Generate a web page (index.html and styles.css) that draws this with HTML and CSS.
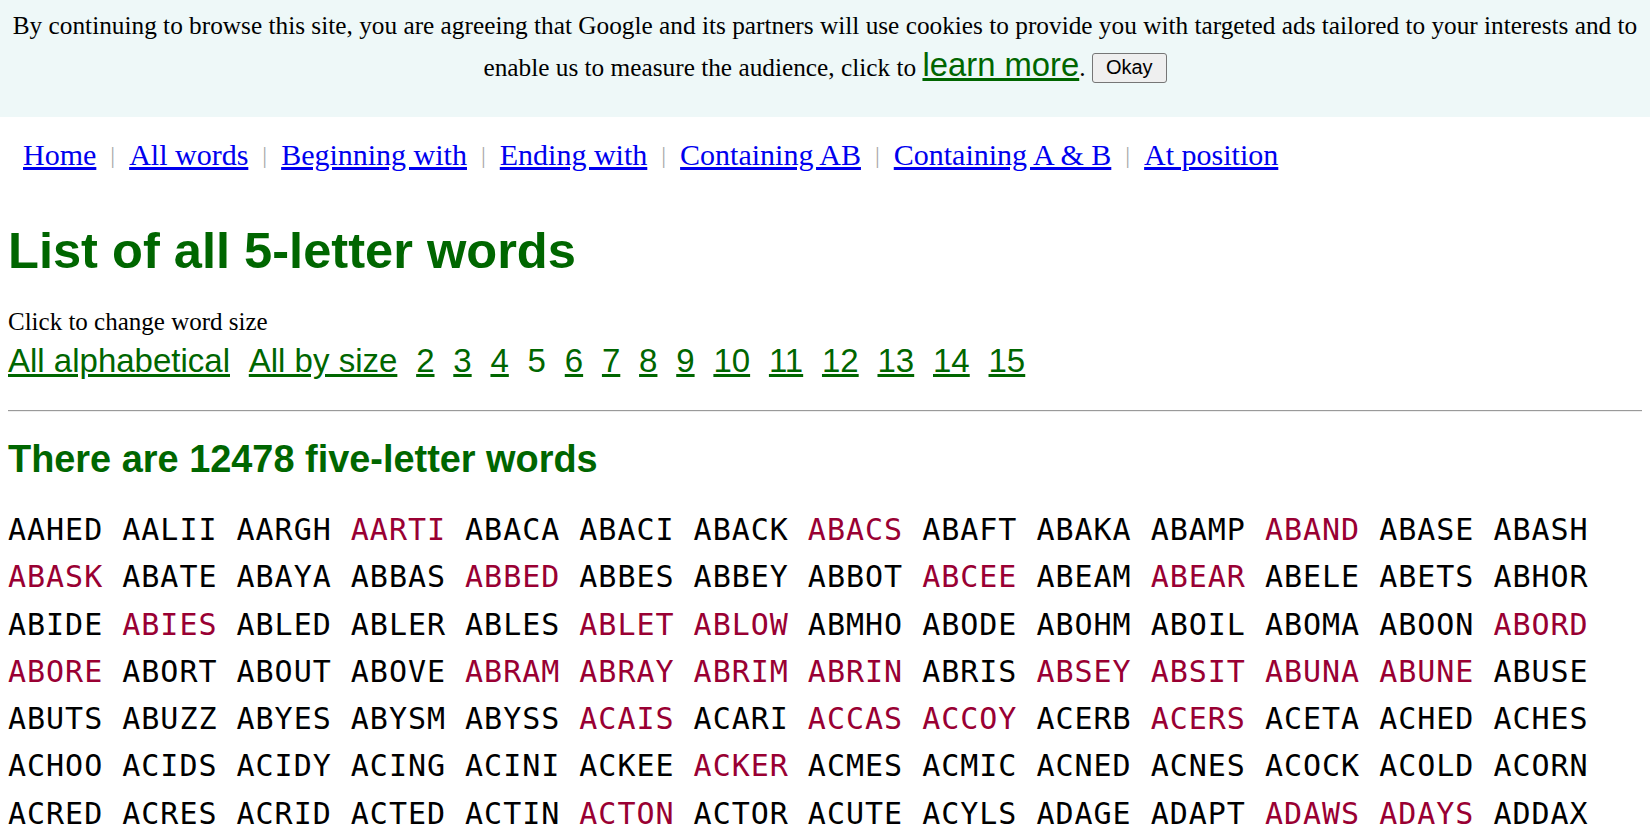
FILE: index.html
```html
<!DOCTYPE html>
<html lang="en">
<head>
<meta charset="utf-8">
<title>List of all 5-letter words</title>
<link rel="stylesheet" href="styles.css">
</head>
<body>
<div class="cookie-bar">
  <p class="cookie-text">By continuing to browse this site, you are agreeing that Google and its partners will use cookies to provide you with targeted ads tailored to your interests and to enable us to measure the audience, click to <a class="learn" href="#">learn more</a>. <button class="okay" type="button">Okay</button></p>
</div>
<div class="page">
  <nav class="topnav">
    <a href="#">Home</a><span class="sep">|</span>
    <a href="#">All words</a><span class="sep">|</span>
    <a href="#">Beginning with</a><span class="sep">|</span>
    <a href="#">Ending with</a><span class="sep">|</span>
    <a href="#">Containing AB</a><span class="sep">|</span>
    <a href="#">Containing A &amp; B</a><span class="sep">|</span>
    <a href="#">At position</a>
  </nav>
  <h1 class="title">List of all 5-letter words</h1>
  <p class="hint">Click to change word size</p>
  <div class="sizes">
    <a href="#">All alphabetical</a>
    <a href="#">All by size</a>
    <a href="#">2</a>
    <a href="#">3</a>
    <a href="#">4</a>
    <span class="current">5</span>
    <a href="#">6</a>
    <a href="#">7</a>
    <a href="#">8</a>
    <a href="#">9</a>
    <a href="#">10</a>
    <a href="#">11</a>
    <a href="#">12</a>
    <a href="#">13</a>
    <a href="#">14</a>
    <a href="#">15</a>
  </div>
  <hr class="rule">
  <h2 class="count">There are 12478 five-letter words</h2>
  <div class="words">
    <span>AAHED</span> <span>AALII</span> <span>AARGH</span> <span class="r">AARTI</span> <span>ABACA</span> <span>ABACI</span> <span>ABACK</span> <span class="r">ABACS</span> <span>ABAFT</span> <span>ABAKA</span> <span>ABAMP</span> <span class="r">ABAND</span> <span>ABASE</span> <span>ABASH</span>
    <span class="r">ABASK</span> <span>ABATE</span> <span>ABAYA</span> <span>ABBAS</span> <span class="r">ABBED</span> <span>ABBES</span> <span>ABBEY</span> <span>ABBOT</span> <span class="r">ABCEE</span> <span>ABEAM</span> <span class="r">ABEAR</span> <span>ABELE</span> <span>ABETS</span> <span>ABHOR</span>
    <span>ABIDE</span> <span class="r">ABIES</span> <span>ABLED</span> <span>ABLER</span> <span>ABLES</span> <span class="r">ABLET</span> <span class="r">ABLOW</span> <span>ABMHO</span> <span>ABODE</span> <span>ABOHM</span> <span>ABOIL</span> <span>ABOMA</span> <span>ABOON</span> <span class="r">ABORD</span>
    <span class="r">ABORE</span> <span>ABORT</span> <span>ABOUT</span> <span>ABOVE</span> <span class="r">ABRAM</span> <span class="r">ABRAY</span> <span class="r">ABRIM</span> <span class="r">ABRIN</span> <span>ABRIS</span> <span class="r">ABSEY</span> <span class="r">ABSIT</span> <span class="r">ABUNA</span> <span class="r">ABUNE</span> <span>ABUSE</span>
    <span>ABUTS</span> <span>ABUZZ</span> <span>ABYES</span> <span>ABYSM</span> <span>ABYSS</span> <span class="r">ACAIS</span> <span>ACARI</span> <span class="r">ACCAS</span> <span class="r">ACCOY</span> <span>ACERB</span> <span class="r">ACERS</span> <span>ACETA</span> <span>ACHED</span> <span>ACHES</span>
    <span>ACHOO</span> <span>ACIDS</span> <span>ACIDY</span> <span>ACING</span> <span>ACINI</span> <span>ACKEE</span> <span class="r">ACKER</span> <span>ACMES</span> <span>ACMIC</span> <span>ACNED</span> <span>ACNES</span> <span>ACOCK</span> <span>ACOLD</span> <span>ACORN</span>
    <span>ACRED</span> <span>ACRES</span> <span>ACRID</span> <span>ACTED</span> <span>ACTIN</span> <span class="r">ACTON</span> <span>ACTOR</span> <span>ACUTE</span> <span>ACYLS</span> <span>ADAGE</span> <span>ADAPT</span> <span class="r">ADAWS</span> <span class="r">ADAYS</span> <span>ADDAX</span>
    <span>ADDED</span> <span>ADDER</span> <span>ADDIO</span> <span>ADDLE</span> <span>ADEEM</span> <span>ADEPT</span> <span>ADHAN</span> <span>ADIEU</span> <span>ADIOS</span> <span>ADITS</span> <span>ADMAN</span> <span>ADMEN</span> <span>ADMIN</span> <span>ADMIT</span>
  </div>
</div>
</body>
</html>
```

FILE: styles.css
```css
html, body {
  margin: 0;
  padding: 0;
  background: #ffffff;
}

body {
  font-family: "Liberation Serif", "Times New Roman", serif;
  font-size: 25px;
  color: #000;
}

.cookie-bar {
  background: #eef8f8;
  height: 117px;
  box-sizing: border-box;
  padding: 5px 8px 0;
}

.cookie-text {
  margin: 0;
  text-align: center;
  font-size: 25.3px;
  line-height: 40px;
}

.learn {
  font-family: "Liberation Sans", Arial, sans-serif;
  font-size: 32.8px;
  color: #006600;
  text-decoration: underline;
}

.okay {
  font-family: "Liberation Sans", Arial, sans-serif;
  font-size: 20px;
  line-height: 23px;
  padding: 2px 13px;
  height: 30px;
  background: #efefef;
  border: 1px solid #767676;
  border-radius: 3px;
  color: #000;
  vertical-align: 2px;
}

.page {
  padding: 0 8px;
}

.topnav {
  margin-top: 21px;
  padding-left: 15px;
  font-size: 30px;
  line-height: 34px;
  display: flex;
  align-items: center;
  gap: 14px;
}

.topnav a {
  color: #0000ee;
  text-decoration: underline;
}

.sep {
  color: #aaaaaa;
  font-size: 24px;
}

.title {
  margin: 50px 0 0;
  font-family: "Liberation Sans", Arial, sans-serif;
  font-size: 50.6px;
  line-height: 58px;
  font-weight: bold;
  color: #006600;
}

.hint {
  margin: 27px 0 0;
  line-height: 29px;
}

.sizes {
  margin-top: 6px;
  display: flex;
  gap: 18.8px;
  font-family: "Liberation Sans", Arial, sans-serif;
  font-size: 33px;
  line-height: 38px;
}

.sizes a {
  color: #006600;
  text-decoration: underline;
}

.sizes .current {
  color: #006600;
}

.rule {
  margin: 30px 0 0;
  border: 0;
  border-top: 1px solid #9a9a9a;
  border-bottom: 1px solid #eeeeee;
  height: 0;
}

.count {
  margin: 26px 0 0;
  font-family: "Liberation Sans", Arial, sans-serif;
  font-size: 37.9px;
  line-height: 43px;
  font-weight: bold;
  color: #006600;
}

.words {
  margin-top: 25px;
  font-family: "DejaVu Sans Mono", monospace;
  font-size: 30px;
  letter-spacing: 0.98px;
  line-height: 47.3px;
  color: #000;
}

.words .r {
  color: #990033;
}
```
